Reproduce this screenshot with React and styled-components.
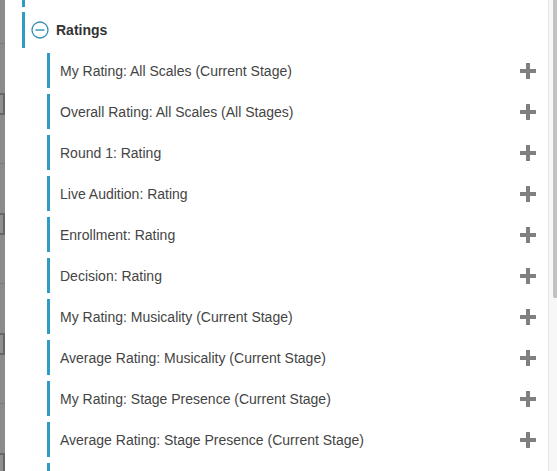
import React from 'react';
import styled, { createGlobalStyle } from 'styled-components';

const GlobalStyle = createGlobalStyle`
  html, body {
    margin: 0;
    padding: 0;
    background: #ffffff;
    overflow: hidden;
  }
  body {
    font-family: 'Liberation Sans', Arial, sans-serif;
  }
`;

const blue = '#2f9cc4';

const Screen = styled.div`
  display: flex;
  width: 557px;
  height: 471px;
  overflow: hidden;
`;

const Backdrop = styled.div`
  width: 5px;
  flex: none;
  background: #8b8b8b;
  display: flex;
  flex-direction: column;
  overflow: hidden;
`;

const BackdropCell = styled.div`
  flex: none;
  height: 120px;
  border-top: 1px solid #7a7a7a;
  box-sizing: border-box;
  padding-top: 49px;
  margin-top: ${(p) => (p.$first ? '-77px' : '0')};
`;

const BackdropBox = styled.div`
  height: 22px;
  width: 5px;
  box-sizing: border-box;
  border: 2px solid #666;
  border-left: none;
  background: #8f8f8f;
`;

const Panel = styled.div`
  flex: 1;
  background: #fff;
  padding-left: 17px;
  display: flex;
  flex-direction: column;
  overflow: hidden;
`;

const TopStub = styled.div`
  flex: none;
  width: 3px;
  height: 7px;
  background: ${blue};
  margin-bottom: 5px;
`;

const Section = styled.div`
  flex: none;
  display: flex;
  align-items: center;
  height: 36px;
  border-left: 3px solid ${blue};
  padding-left: 6px;
  gap: 7px;
`;

const SectionTitle = styled.span`
  font-size: 14px;
  font-weight: bold;
  color: #333;
`;

const List = styled.div`
  flex: none;
  display: flex;
  flex-direction: column;
  gap: 6px;
  margin-top: 5px;
  padding-left: 25px;
`;

const Item = styled.div`
  display: flex;
  align-items: center;
  justify-content: space-between;
  height: 35px;
  border-left: 3px solid ${blue};
  padding-left: 10px;
  padding-right: 12px;
  flex: none;
`;

const ItemLabel = styled.span`
  font-size: 14px;
  color: #444;
`;

const Scrollbar = styled.div`
  width: 8px;
  flex: none;
  border-left: 1px solid #e4e4e4;
  background: #f7f7f7;
  display: flex;
  justify-content: flex-end;
`;

const Thumb = styled.div`
  width: 4px;
  height: 298px;
  background: #c1c1c1;
  border-bottom-left-radius: 2px;
`;

const MinusCircle = () => (
  <svg width="18" height="18" viewBox="0 0 18 18">
    <circle cx="9" cy="9" r="8" fill="none" stroke="#2f8fb2" strokeWidth="1.3" />
    <line x1="4.5" y1="9" x2="13.5" y2="9" stroke="#2f8fb2" strokeWidth="1.4" />
  </svg>
);

const Plus = () => (
  <svg width="16" height="16" viewBox="0 0 16 16">
    <rect x="6" y="0" width="4" height="16" fill="#808080" />
    <rect x="0" y="6" width="16" height="4" fill="#808080" />
  </svg>
);

const items = [
  'My Rating: All Scales (Current Stage)',
  'Overall Rating: All Scales (All Stages)',
  'Round 1: Rating',
  'Live Audition: Rating',
  'Enrollment: Rating',
  'Decision: Rating',
  'My Rating: Musicality (Current Stage)',
  'Average Rating: Musicality (Current Stage)',
  'My Rating: Stage Presence (Current Stage)',
  'Average Rating: Stage Presence (Current Stage)',
  '',
];

export default function App() {
  return (
    <>
      <GlobalStyle />
      <Screen>
        <Backdrop>
          {[0, 1, 2, 3, 4].map((i) => (
            <BackdropCell key={i} $first={i === 0}>
              <BackdropBox />
            </BackdropCell>
          ))}
        </Backdrop>
        <Panel>
          <TopStub />
          <Section>
            <MinusCircle />
            <SectionTitle>Ratings</SectionTitle>
          </Section>
          <List>
            {items.map((label, i) => (
              <Item key={i}>
                <ItemLabel>{label}</ItemLabel>
                {label && <Plus />}
              </Item>
            ))}
          </List>
        </Panel>
        <Scrollbar>
          <Thumb />
        </Scrollbar>
      </Screen>
    </>
  );
}
